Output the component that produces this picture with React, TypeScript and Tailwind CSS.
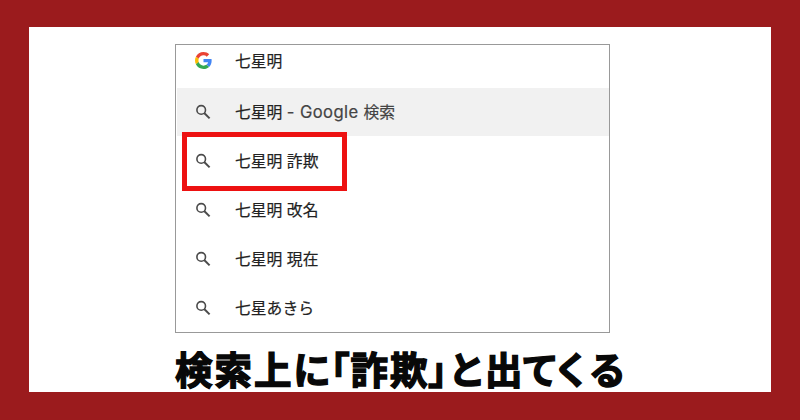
import React from 'react';

const GoogleLogo = () => (
  <svg viewBox="0 0 48 48" className="h-[17px] w-[17px]">
    <path fill="#EA4335" d="M24 9.5c3.54 0 6.71 1.22 9.21 3.6l6.85-6.85C35.9 2.38 30.47 0 24 0 14.62 0 6.51 5.38 2.56 13.22l7.98 6.19C12.43 13.72 17.74 9.5 24 9.5z" />
    <path fill="#4285F4" d="M46.98 24.55c0-1.57-.15-3.09-.38-4.55H24v9.02h12.94c-.58 2.96-2.26 5.48-4.78 7.18l7.73 6c4.51-4.18 7.09-10.36 7.09-17.65z" />
    <path fill="#FBBC05" d="M10.53 28.59A14.5 14.5 0 0 1 9.77 24c0-1.6.28-3.14.76-4.59l-7.98-6.19A23.9 23.9 0 0 0 0 24c0 3.88.92 7.54 2.56 10.78z" />
    <path fill="#34A853" d="M24 48c6.48 0 11.93-2.13 15.89-5.81l-7.73-6c-2.15 1.45-4.92 2.3-8.16 2.3-6.26 0-11.57-4.22-13.47-9.91l-7.98 6.19C6.51 42.62 14.62 48 24 48z" />
  </svg>
);

const SearchIcon = () => (
  <svg viewBox="0 0 16 16" className="h-4 w-4" fill="none" stroke="#4b4b4b">
    <circle cx="6.2" cy="5.9" r="4.3" strokeWidth="1.6" />
    <path d="M9.2 9 14.6 14.4" strokeWidth="2" />
  </svg>
);

const suggestions = ['詐欺', '改名', '現在'];

function Row({ icon, children, className = 'h-[49px]' }: { icon: React.ReactNode; children: React.ReactNode; className?: string }) {
  return (
    <div className={`flex shrink-0 items-center whitespace-nowrap ${className}`}>
      <div className="ml-[16px] flex w-[20px] justify-center">{icon}</div>
      <div className="ml-[22px] pt-[2px] text-[15.8px] leading-6 text-[#222] [-webkit-text-stroke:0.2px_#222]">{children}</div>
    </div>
  );
}

const caption: { char: string; width: string }[] = [
  { char: '検', width: 'w-[39.5px]' },
  { char: '索', width: 'w-[39.5px]' },
  { char: '上', width: 'w-[39.5px]' },
  { char: 'に', width: 'w-[37px]' },
  { char: '「', width: 'w-[20px]' },
  { char: '詐', width: 'w-[39.5px]' },
  { char: '欺', width: 'w-[38.5px]' },
  { char: '」', width: 'w-[22px]' },
  { char: 'と', width: 'w-[34.5px]' },
  { char: '出', width: 'w-[38px]' },
  { char: 'て', width: 'w-[33.5px]' },
  { char: 'く', width: 'w-[33px]' },
  { char: 'る', width: 'w-[34px]' },
];

export default function App() {
  return (
    <div lang="ja" className="h-[420px] w-[800px] overflow-hidden bg-[#9b1b1d] pl-[29px] pt-[27px] font-['Inter','Noto_Sans_CJK_JP',sans-serif]">
      <main className="h-[365px] w-[742px] bg-white pl-[146px] pt-[17px]">
        <section className="relative flex h-[289px] w-[435px] flex-col overflow-hidden border border-[#999] bg-white pl-[1px]">
          <Row icon={<GoogleLogo />} className="-mt-[9px] mb-[3px] h-[49px]">七星明</Row>
          <Row icon={<SearchIcon />} className="h-[48px] bg-[#f1f1f1]">
            <span className="block pb-[2px]">
              七星明 <span className="text-[16.6px] tracking-[0.4px] text-[#444] [-webkit-text-stroke:0.2px_#444]">- Google </span><span className="text-[#444] [-webkit-text-stroke:0.2px_#444]">検索</span>
            </span>
          </Row>
          {suggestions.map((s) => (
            <Row key={s} icon={<SearchIcon />}>七星明 {s}</Row>
          ))}
          <Row icon={<SearchIcon />}>七星あきら</Row>
          <div className="absolute left-[6px] top-[87px] h-[59px] w-[165px] border-[5px] border-[#ed1111]" />
        </section>
        <h1 className="mt-[13px] flex h-[44px] items-center font-['Noto_Sans_CJK_JP',sans-serif] text-[37.5px] font-bold leading-[44px] text-[#080808] [-webkit-text-stroke:1.4px_#080808] [font-feature-settings:'palt']">
          {caption.map(({ char, width }) => (
            <span key={char} className={`${width} shrink-0 whitespace-nowrap`}>{char}</span>
          ))}
        </h1>
      </main>
    </div>
  );
}
